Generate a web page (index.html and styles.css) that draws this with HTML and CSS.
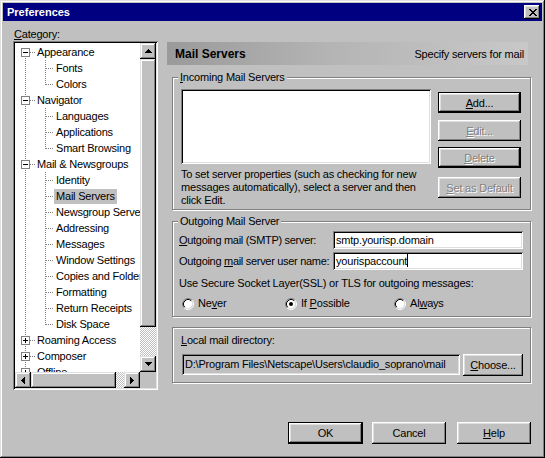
FILE: index.html
```html
<!DOCTYPE html>
<html lang="en">
<head>
  <meta charset="UTF-8">
  <title>Preferences</title>
  <link rel="stylesheet" href="styles.css">
</head>
<body>

<div class="window">
  <!-- Title bar -->
  <div class="titlebar">
    <span class="title">Preferences</span>
    <button class="close-btn" title="Close">
      <svg width="8" height="7" viewBox="0 0 8 7" shape-rendering="crispEdges"><path d="M0 0h2v1H0zM6 0h2v1H6zM1 1h2v1H1zM5 1h2v1H5zM2 2h4v1H2zM3 3h2v1H3zM2 4h4v1H2zM1 5h2v1H1zM5 5h2v1H5zM0 6h2v1H0zM6 6h2v1H6z"/></svg>
    </button>
  </div>

  <div class="main">
    <!-- Category tree -->
    <div class="category">
      <div class="cat-label"><u>C</u>ategory:</div>
      <div class="tree-box">
        <div class="tree">
          <div class="row node first"><span class="cell"><svg class="exp" width="9" height="9"><rect x=".5" y=".5" width="8" height="8" fill="#fff" stroke="#808080"/><path d="M2 4.5h5" stroke="#000"/></svg></span><span class="label">Appearance</span></div>
          <div class="row leaf"><span class="cell trunk"></span><span class="cell2"></span><span class="label">Fonts</span></div>
          <div class="row leaf"><span class="cell trunk"></span><span class="cell2 last"></span><span class="label">Colors</span></div>
          <div class="row node"><span class="cell trunk"><svg class="exp" width="9" height="9"><rect x=".5" y=".5" width="8" height="8" fill="#fff" stroke="#808080"/><path d="M2 4.5h5" stroke="#000"/></svg></span><span class="label">Navigator</span></div>
          <div class="row leaf"><span class="cell trunk"></span><span class="cell2"></span><span class="label">Languages</span></div>
          <div class="row leaf"><span class="cell trunk"></span><span class="cell2"></span><span class="label">Applications</span></div>
          <div class="row leaf"><span class="cell trunk"></span><span class="cell2 last"></span><span class="label">Smart Browsing</span></div>
          <div class="row node"><span class="cell trunk"><svg class="exp" width="9" height="9"><rect x=".5" y=".5" width="8" height="8" fill="#fff" stroke="#808080"/><path d="M2 4.5h5" stroke="#000"/></svg></span><span class="label">Mail &amp; Newsgroups</span></div>
          <div class="row leaf"><span class="cell trunk"></span><span class="cell2"></span><span class="label">Identity</span></div>
          <div class="row leaf"><span class="cell trunk"></span><span class="cell2"></span><span class="label selected">Mail Servers</span></div>
          <div class="row leaf"><span class="cell trunk"></span><span class="cell2"></span><span class="label">Newsgroup Servers</span></div>
          <div class="row leaf"><span class="cell trunk"></span><span class="cell2"></span><span class="label">Addressing</span></div>
          <div class="row leaf"><span class="cell trunk"></span><span class="cell2"></span><span class="label">Messages</span></div>
          <div class="row leaf"><span class="cell trunk"></span><span class="cell2"></span><span class="label">Window Settings</span></div>
          <div class="row leaf"><span class="cell trunk"></span><span class="cell2"></span><span class="label">Copies and Folders</span></div>
          <div class="row leaf"><span class="cell trunk"></span><span class="cell2"></span><span class="label">Formatting</span></div>
          <div class="row leaf"><span class="cell trunk"></span><span class="cell2"></span><span class="label">Return Receipts</span></div>
          <div class="row leaf"><span class="cell trunk"></span><span class="cell2 last"></span><span class="label">Disk Space</span></div>
          <div class="row node"><span class="cell trunk"><svg class="exp" width="9" height="9"><rect x=".5" y=".5" width="8" height="8" fill="#fff" stroke="#808080"/><path d="M2 4.5h5M4.5 2v5" stroke="#000"/></svg></span><span class="label">Roaming Access</span></div>
          <div class="row node"><span class="cell trunk"><svg class="exp" width="9" height="9"><rect x=".5" y=".5" width="8" height="8" fill="#fff" stroke="#808080"/><path d="M2 4.5h5M4.5 2v5" stroke="#000"/></svg></span><span class="label">Composer</span></div>
          <div class="row node"><span class="cell trunk"><svg class="exp" width="9" height="9"><rect x=".5" y=".5" width="8" height="8" fill="#fff" stroke="#808080"/><path d="M2 4.5h5M4.5 2v5" stroke="#000"/></svg></span><span class="label">Offline</span></div>
          <div class="row node"><span class="cell trunk"><svg class="exp" width="9" height="9"><rect x=".5" y=".5" width="8" height="8" fill="#fff" stroke="#808080"/><path d="M2 4.5h5M4.5 2v5" stroke="#000"/></svg></span><span class="label">Advanced</span></div>
        </div>

        <!-- vertical scrollbar -->
        <div class="vscroll">
          <div class="sb-btn"><svg width="7" height="4" shape-rendering="crispEdges"><path d="M3 0h1v1h1v1h1v1h1v1H0V3h1V2h1V1h1z"/></svg></div>
          <div class="sb-thumb v"></div>
          <div class="sb-track"></div>
          <div class="sb-btn"><svg width="7" height="4" shape-rendering="crispEdges"><path d="M0 0h7v1h-1v1h-1v1h-1v1h-1v-1h-1v-1h-1v-1h-1z"/></svg></div>
        </div>

        <!-- horizontal scrollbar -->
        <div class="hscroll">
          <div class="sb-btn"><svg width="4" height="7" shape-rendering="crispEdges"><path d="M3 0h1v7h-1v-1h-1v-1h-1v-1h-1v-1h1v-1h1v-1h1z"/></svg></div>
          <div class="sb-thumb h"></div>
          <div class="sb-track"></div>
          <div class="sb-btn"><svg width="4" height="7" shape-rendering="crispEdges"><path d="M0 0h1v1h1v1h1v1h1v1h-1v1h-1v1h-1v1h-1z"/></svg></div>
        </div>
        <div class="corner"></div>
      </div>
    </div>

    <!-- Mail Servers panel -->
    <div class="panel">
      <div class="panel-head">
        <span class="head-title">Mail Servers</span>
        <span class="head-desc">Specify servers for mail</span>
      </div>

      <div class="group incoming">
        <span class="legend"><u>I</u>ncoming Mail Servers</span>
        <div class="incoming-body">
          <div class="incoming-left">
            <div class="listbox"></div>
            <p class="hint">To set server properties (such as checking for new<br>messages automatically), select a server and then<br>click Edit.</p>
          </div>
          <div class="side-buttons">
            <button class="btn default b-add"><u>A</u>dd...</button>
            <button class="btn disabled b-edit"><u>E</u>dit...</button>
            <button class="btn default disabled b-delete"><u>D</u>elete</button>
            <button class="btn disabled b-default"><u>S</u>et as Default</button>
          </div>
        </div>
      </div>

      <div class="group outgoing">
        <span class="legend">Outgoing Mail Server</span>
        <div class="out-grid">
          <span class="out-label"><u>O</u>utgoing mail (SMTP) server:</span>
          <div class="field sunken">smtp.yourisp.domain</div>
          <span class="out-label">Outgoing <u>m</u>ail server user name:</span>
          <div class="field sunken">yourispaccount<span class="caret"></span></div>
        </div>
        <div class="ssl-text">Use Secure Socket Layer(SSL) or TLS for outgoing messages:</div>
        <div class="radios">
          <label class="radio"><svg width="12" height="12"><circle cx="6" cy="6" r="4.5" fill="#fff"/><path d="M2.11 9.89A5.5 5.5 0 0 1 9.89 2.11" fill="none" stroke="#808080"/><path d="M9.89 2.11A5.5 5.5 0 0 1 2.11 9.89" fill="none" stroke="#fff"/><path d="M2.82 9.18A4.5 4.5 0 0 1 9.18 2.82" fill="none" stroke="#000"/><path d="M9.18 2.82A4.5 4.5 0 0 1 2.82 9.18" fill="none" stroke="#dfdfdf"/></svg><span>Ne<u>v</u>er</span></label>
          <label class="radio"><svg width="12" height="12"><circle cx="6" cy="6" r="4.5" fill="#fff"/><path d="M2.11 9.89A5.5 5.5 0 0 1 9.89 2.11" fill="none" stroke="#808080"/><path d="M9.89 2.11A5.5 5.5 0 0 1 2.11 9.89" fill="none" stroke="#fff"/><path d="M2.82 9.18A4.5 4.5 0 0 1 9.18 2.82" fill="none" stroke="#000"/><path d="M9.18 2.82A4.5 4.5 0 0 1 2.82 9.18" fill="none" stroke="#dfdfdf"/><circle cx="6" cy="6" r="2"/></svg><span>If <u>P</u>ossible</span></label>
          <label class="radio"><svg width="12" height="12"><circle cx="6" cy="6" r="4.5" fill="#fff"/><path d="M2.11 9.89A5.5 5.5 0 0 1 9.89 2.11" fill="none" stroke="#808080"/><path d="M9.89 2.11A5.5 5.5 0 0 1 2.11 9.89" fill="none" stroke="#fff"/><path d="M2.82 9.18A4.5 4.5 0 0 1 9.18 2.82" fill="none" stroke="#000"/><path d="M9.18 2.82A4.5 4.5 0 0 1 2.82 9.18" fill="none" stroke="#dfdfdf"/></svg><span>Al<u>w</u>ays</span></label>
        </div>
      </div>

      <div class="group local">
        <div class="local-label"><u>L</u>ocal mail directory:</div>
        <div class="local-row">
          <div class="field readonly">D:\Program Files\Netscape\Users\claudio_soprano\mail</div>
          <button class="btn b-choose"><u>C</u>hoose...</button>
        </div>
      </div>
    </div>
  </div>

  <!-- Dialog buttons -->
  <div class="dialog-buttons">
    <button class="btn default b-ok">OK</button>
    <button class="btn b-cancel">Cancel</button>
    <button class="btn b-help"><u>H</u>elp</button>
  </div>
</div>

</body>
</html>
```

FILE: styles.css
```css
* {
  box-sizing: border-box;
}
body {
  margin: 0;
  font-family: "Liberation Sans", Arial, sans-serif;
  font-size: 11px;
  letter-spacing: -0.2px;
  color: #000;
  background-color: #c0c0c0;
}
u {
  text-decoration: underline;
  text-underline-offset: 1px;
}
button {
  font: inherit;
  letter-spacing: inherit;
  color: inherit;
  border: 0;
  padding: 0;
  margin: 0;
  background-color: #c0c0c0;
}

/* window frame */
.window {
  width: 545px;
  height: 458px;
  padding: 3px;
  background-color: #c0c0c0;
  box-shadow: inset -1px -1px #000, inset 1px 1px #dfdfdf, inset -2px -2px #808080, inset 2px 2px #fff;
  display: flex;
  flex-direction: column;
}
.titlebar {
  height: 18px;
  background-color: #000080;
  color: #fff;
  display: flex;
  align-items: center;
  justify-content: space-between;
  padding: 0 2px 0 4px;
}
.title {
  font-weight: bold;
  letter-spacing: 0;
}
.close-btn {
  width: 16px;
  height: 14px;
  display: flex;
  align-items: center;
  justify-content: center;
  padding-left: 1px;
  box-shadow: inset -1px -1px #000, inset 1px 1px #fff, inset -2px -2px #808080, inset 2px 2px #dfdfdf;
}

.main {
  display: flex;
  padding: 6px 0 0 10px;
}

/* category tree */
.category {
  width: 145px;
}
.cat-label {
  line-height: 14px;
  padding-left: 1px;
}
.tree-box {
  height: 349px;
  padding: 2px;
  box-shadow: inset 1px 1px #808080, inset -1px -1px #fff, inset 2px 2px #000, inset -2px -2px #dfdfdf;
  display: grid;
  grid-template-columns: 125px 16px;
  grid-template-rows: 329px 16px;
}
.tree {
  background-color: #fff;
  overflow: hidden;
  padding-top: 1px;
}
.row {
  display: flex;
  height: 16px;
  line-height: 16px;
  white-space: nowrap;
}
.cell {
  flex: 0 0 20px;
  padding: 4px 0 0 6px;
  background:
    repeating-linear-gradient(to right, #808080 0 1px, transparent 1px 2px) 15px 8px / 5px 1px no-repeat;
}
.cell.trunk {
  background:
    repeating-linear-gradient(to right, #808080 0 1px, transparent 1px 2px) 15px 8px / 5px 1px no-repeat,
    repeating-linear-gradient(to bottom, #808080 0 1px, transparent 1px 2px) 10px 0 / 1px 100% no-repeat;
}
.leaf .cell.trunk {
  background:
    repeating-linear-gradient(to bottom, #808080 0 1px, transparent 1px 2px) 10px 0 / 1px 100% no-repeat;
}
.first .cell {
  background:
    repeating-linear-gradient(to right, #808080 0 1px, transparent 1px 2px) 15px 8px / 5px 1px no-repeat,
    repeating-linear-gradient(to bottom, #808080 0 1px, transparent 1px 2px) 10px 12px / 1px 4px no-repeat;
}
.exp {
  display: block;
}
.cell2 {
  flex: 0 0 19px;
  background:
    repeating-linear-gradient(to right, #808080 0 1px, transparent 1px 2px) 11px 8px / 8px 1px no-repeat,
    repeating-linear-gradient(to bottom, #808080 0 1px, transparent 1px 2px) 10px 0 / 1px 100% no-repeat;
}
.cell2.last {
  background:
    repeating-linear-gradient(to right, #808080 0 1px, transparent 1px 2px) 11px 8px / 8px 1px no-repeat,
    repeating-linear-gradient(to bottom, #808080 0 1px, transparent 1px 2px) 10px 0 / 1px 9px no-repeat;
}
.label {
  padding: 0 2px;
  height: 15px;
  line-height: 15px;
  margin-top: 1px;
}
.label.selected {
  background-color: #c0c0c0;
}

/* scrollbars */
.vscroll {
  display: flex;
  flex-direction: column;
}
.hscroll {
  display: flex;
}
.sb-btn {
  flex: 0 0 16px;
  height: 16px;
  display: flex;
  align-items: center;
  justify-content: center;
  background-color: #c0c0c0;
  box-shadow: inset -1px -1px #000, inset 1px 1px #dfdfdf, inset -2px -2px #808080, inset 2px 2px #fff;
}
.sb-thumb {
  background-color: #c0c0c0;
  box-shadow: inset -1px -1px #000, inset 1px 1px #dfdfdf, inset -2px -2px #808080, inset 2px 2px #fff;
}
.sb-thumb.v {
  flex: 0 0 268px;
}
.sb-thumb.h {
  flex: 0 0 85px;
}
.sb-track {
  flex: 1;
  background: repeating-conic-gradient(#fff 0 25%, #c0c0c0 0 50%) 0 0 / 2px 2px;
}
.corner {
  background-color: #c0c0c0;
}

/* right panel */
.panel {
  width: 364px;
  margin-left: 9px;
  padding-top: 15px;
}
.panel-head {
  height: 23px;
  margin-right: 3px;
  display: flex;
  align-items: center;
  justify-content: space-between;
  padding: 0 4px 0 8px;
  background: linear-gradient(to right, #9a9a9a, #b4b4b4 45%, #c8c8c8);
}
.head-title {
  font-weight: bold;
  font-size: 12px;
  letter-spacing: 0;
}
.group {
  margin-left: 5px;
  border: 1px solid #808080;
  box-shadow: inset 1px 1px #fff, 1px 1px #fff;
}
.legend {
  display: table;
  margin: -7px 0 0 5px;
  padding: 0 2px;
  line-height: 13px;
  background-color: #c0c0c0;
}
.incoming {
  margin-top: 12px;
  padding-bottom: 2px;
}
.incoming-body {
  display: flex;
  margin: 5px 0 0 8px;
}
.incoming-left {
  width: 250px;
}
.listbox {
  height: 75px;
  background-color: #fff;
  box-shadow: inset 1px 1px #808080, inset -1px -1px #fff, inset 2px 2px #000, inset -2px -2px #dfdfdf;
}
.hint {
  margin: 4px 0 0;
  line-height: 13px;
}
.side-buttons {
  width: 83px;
  margin-left: 7px;
  display: flex;
  flex-direction: column;
}

.btn {
  height: 21px;
  box-shadow: inset -1px -1px #000, inset 1px 1px #fff, inset -2px -2px #808080, inset 2px 2px #dfdfdf;
}
.btn.default {
  box-shadow: inset 0 0 0 1px #000, inset -2px -2px #000, inset 2px 2px #fff, inset -3px -3px #808080, inset 3px 3px #dfdfdf;
}
.btn.disabled {
  color: #808080;
  text-shadow: 1px 1px #fff;
}
.b-add {
  margin-top: 3px;
}
.b-edit {
  margin-top: 7px;
}
.b-delete {
  margin-top: 6px;
}
.b-default {
  margin-top: 9px;
}

.outgoing {
  margin-top: 11px;
  padding: 0 0 6px 5px;
}
.outgoing .legend {
  margin-left: 0;
}
.out-grid {
  display: grid;
  grid-template-columns: 154px 190px;
  grid-auto-rows: 18px;
  row-gap: 3px;
  align-items: center;
  margin: 3px 0 0 1px;
}
.out-label {
  white-space: nowrap;
  letter-spacing: -0.3px;
}
.sunken {
  background-color: #fff;
  box-shadow: inset 1px 1px #808080, inset -1px -1px #fff, inset 2px 2px #000, inset -2px -2px #dfdfdf;
}
.field {
  height: 18px;
  line-height: 18px;
  padding-left: 3px;
  white-space: nowrap;
  overflow: hidden;
}
.caret {
  display: inline-block;
  width: 1px;
  height: 13px;
  background-color: #000;
  vertical-align: -2px;
}
.ssl-text {
  margin: 7px 0 0 1px;
  line-height: 13px;
}
.radios {
  display: grid;
  grid-template-columns: 103px 109px auto;
  margin: 7px 0 0 4px;
}
.radio {
  display: flex;
  align-items: center;
  gap: 4px;
  line-height: 13px;
}
.radio svg {
  flex: 0 0 12px;
}

.local {
  margin-top: 10px;
  padding: 6px 0 6px 8px;
}
.local-label {
  line-height: 13px;
}
.local-row {
  display: flex;
  margin-top: 7px;
  padding-left: 1px;
}
.field.readonly {
  width: 278px;
  height: 21px;
  line-height: 21px;
  padding-left: 3px;
  background-color: #c0c0c0;
  box-shadow: inset 1px 1px #808080, inset -1px -1px #fff, inset 2px 2px #000, inset -2px -2px #dfdfdf;
}
.b-choose {
  width: 60px;
  height: 22px;
  margin-left: 3px;
}

/* dialog buttons */
.dialog-buttons {
  display: flex;
  justify-content: flex-end;
  margin-top: 32px;
  padding-right: 11px;
}
.dialog-buttons .btn {
  width: 74px;
  height: 22px;
}
.dialog-buttons .b-ok {
  width: 75px;
}
.dialog-buttons .b-cancel {
  margin-left: 9px;
}
.dialog-buttons .b-help {
  margin-left: 11px;
}
```
